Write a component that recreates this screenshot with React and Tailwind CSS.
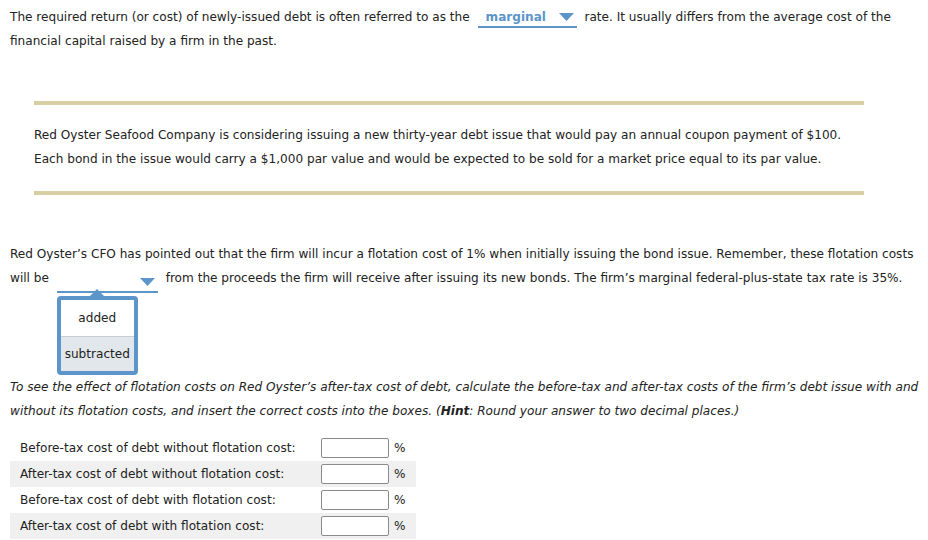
import React from "react";

const font = { fontFamily: "Verdana, 'DejaVu Sans', sans-serif" };

function Caret({ className = "" }) {
  return (
    <svg width="15" height="8" viewBox="0 0 15 8" className={className}>
      <polygon points="0,0 15,0 7.5,8" fill="#5b95c9" />
    </svg>
  );
}

function Blank({ value, width, children }) {
  return (
    <span className="relative inline-block align-baseline mx-[4px]">
      <span
        className={`inline-flex items-center justify-between border-b-2 border-[#5b95c9] h-[20px] pl-[8px] pr-[3px] ${width}`}
      >
        <span className="font-bold text-[#5b95c9]">{value}</span>
        <Caret />
      </span>
      {children}
    </span>
  );
}

const rows = [
  "Before-tax cost of debt without flotation cost:",
  "After-tax cost of debt without flotation cost:",
  "Before-tax cost of debt with flotation cost:",
  "After-tax cost of debt with flotation cost:",
];

export default function App() {
  return (
    <div className="w-[928px] h-[540px] bg-white text-[12.1px] text-[#222] overflow-hidden" style={font}>
      <p className="pl-[10px] pt-[5px] leading-[24px]">
        The required return (or cost) of newly-issued debt is often referred to as the{" "}
        <Blank value="marginal" width="w-[99px]" />{" "}
        rate. It usually differs from the average cost of the financial capital raised by a firm in the past.
      </p>

      <div className="ml-[34px] w-[830px] mt-[48px]">
        <div className="h-[4px] bg-[#d9cda2]" />
        <p className="leading-[24px] pt-[18px] pb-[20px]">
          Red Oyster Seafood Company is considering issuing a new thirty-year debt issue that would pay an annual coupon payment of $100.
          Each bond in the issue would carry a $1,000 par value and would be expected to be sold for a market price equal to its par value.
        </p>
        <div className="h-[4px] bg-[#d9cda2]" />
      </div>

      <p className="pl-[10px] pt-[47px] leading-[24px]">
        Red Oyster’s CFO has pointed out that the firm will incur a flotation cost of 1% when initially issuing the bond issue. Remember, these flotation costs will be{" "}
        <Blank value="" width="w-[101px]">
          <span className="absolute left-0 top-[23px] z-10 flex flex-col items-center w-[81px]">
            <svg width="14" height="7" viewBox="0 0 14 7" className="block">
              <polygon points="0,7 7,0 14,7" fill="#5b95c9" />
            </svg>
            <span className="block w-[81px] border-4 border-[#5b95c9] rounded-[4px] bg-white overflow-hidden leading-[20px]">
              <span className="block text-center py-[8px] border-b border-[#c5ced4]">added</span>
              <span className="block text-center py-[7px] bg-[#e1e7ea]">subtracted</span>
            </span>
          </span>
        </Blank>{" "}
        from the proceeds the firm will receive after issuing its new bonds. The firm’s marginal federal-plus-state tax rate is 35%.
      </p>

      <p className="pl-[10px] mt-[82px] leading-[24px] italic">
        To see the effect of flotation costs on Red Oyster’s after-tax cost of debt, calculate the before-tax and after-tax costs of the firm’s debt issue with and without its flotation costs, and insert the correct costs into the boxes. (<span className="font-bold">Hint</span>: Round your answer to two decimal places.)
      </p>

      <div className="ml-[10px] w-[406px] mt-[12px]">
        {rows.map((r, i) => (
          <div key={i} className={`flex items-center h-[26px] ${i % 2 ? "bg-[#f0f0f0]" : ""}`}>
            <span className="pl-[10px] w-[311px]">{r}</span>
            <span className="w-[68px] h-[20px] border border-[#8a8a8a] rounded-[2px] bg-white" />
            <span className="pl-[5px]">%</span>
          </div>
        ))}
      </div>
    </div>
  );
}
